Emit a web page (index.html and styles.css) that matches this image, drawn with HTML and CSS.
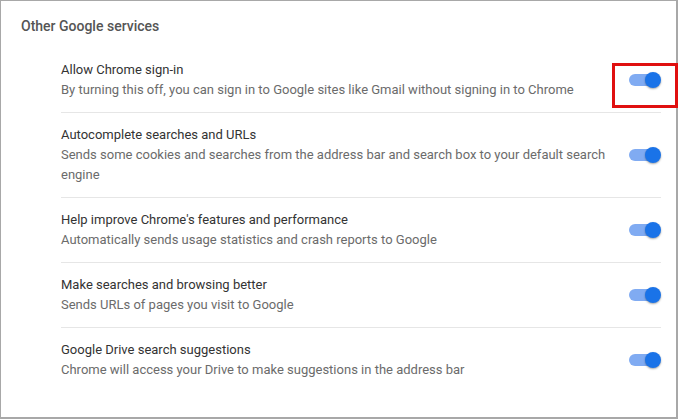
FILE: index.html
```html
<!DOCTYPE html>
<html lang="en">
<head>
  <meta charset="UTF-8" />
  <title>Other Google services</title>
  <link rel="stylesheet" href="styles.css">
</head>
<body>
  <div class="frame">
    <h2 class="section-title">Other Google services</h2>

    <div class="settings">
      <div class="setting highlight">
        <div class="setting-text">
          <div class="setting-label">Allow Chrome sign-in</div>
          <div class="setting-desc">By turning this off, you can sign in to Google sites like Gmail without signing in to Chrome</div>
        </div>
        <div class="toggle"></div>
      </div>

      <div class="setting">
        <div class="setting-text">
          <div class="setting-label">Autocomplete searches and URLs</div>
          <div class="setting-desc">Sends some cookies and searches from the address bar and search box to your default search engine</div>
        </div>
        <div class="toggle"></div>
      </div>

      <div class="setting">
        <div class="setting-text">
          <div class="setting-label">Help improve Chrome's features and performance</div>
          <div class="setting-desc">Automatically sends usage statistics and crash reports to Google</div>
        </div>
        <div class="toggle"></div>
      </div>

      <div class="setting">
        <div class="setting-text">
          <div class="setting-label">Make searches and browsing better</div>
          <div class="setting-desc">Sends URLs of pages you visit to Google</div>
        </div>
        <div class="toggle"></div>
      </div>

      <div class="setting">
        <div class="setting-text">
          <div class="setting-label">Google Drive search suggestions</div>
          <div class="setting-desc">Chrome will access your Drive to make suggestions in the address bar</div>
        </div>
        <div class="toggle"></div>
      </div>
    </div>
  </div>
</body>
</html>
```

FILE: styles.css
```css
* {
  box-sizing: border-box;
  margin: 0;
  padding: 0;
}
body {
  font-family: Roboto, "Liberation Sans", Arial, sans-serif;
  background-color: #fff;
  color: #333;
  width: 678px;
  height: 419px;
  overflow: hidden;
}
.frame {
  width: 678px;
  height: 419px;
  border-top: 1px solid #a8a8a8;
  border-left: 1px solid #a8a8a8;
  border-right: 2px solid #a8a8a8;
  border-bottom: 2px solid #a8a8a8;
  padding: 15px 0 0 20px;
}
.section-title {
  font-size: 14px;
  font-weight: 500;
  line-height: 20px;
  color: #555;
  margin-bottom: 12px;
}
.settings {
  margin-left: 40px;
  width: 600px;
}
.setting {
  display: flex;
  align-items: center;
  padding: 12px 0;
  border-bottom: 1px solid #e6e6e6;
}
.setting:last-child {
  border-bottom: none;
}
.setting-text {
  flex: 1;
  padding-right: 16px;
  font-size: 13px;
  line-height: 20px;
}
.setting-label {
  color: #333;
}
.setting-desc {
  color: #6b6b6b;
}
.toggle {
  position: relative;
  width: 32px;
  height: 16px;
  flex-shrink: 0;
}
.toggle::before {
  content: "";
  position: absolute;
  left: 0;
  top: 2px;
  width: 28px;
  height: 12px;
  border-radius: 6px;
  background: #80abf2;
}
.toggle::after {
  content: "";
  position: absolute;
  right: 0;
  top: 0;
  width: 16px;
  height: 16px;
  border-radius: 50%;
  background: #1a73e8;
  box-shadow: 0 1px 2px rgba(0,0,0,0.35);
}
/* red annotation box drawn over the first toggle */
.highlight {
  position: relative;
}
.highlight::after {
  content: "";
  position: absolute;
  left: 551px;
  top: 15px;
  width: 60px;
  height: 39px;
  border: 3px solid #e01010;
}
```
